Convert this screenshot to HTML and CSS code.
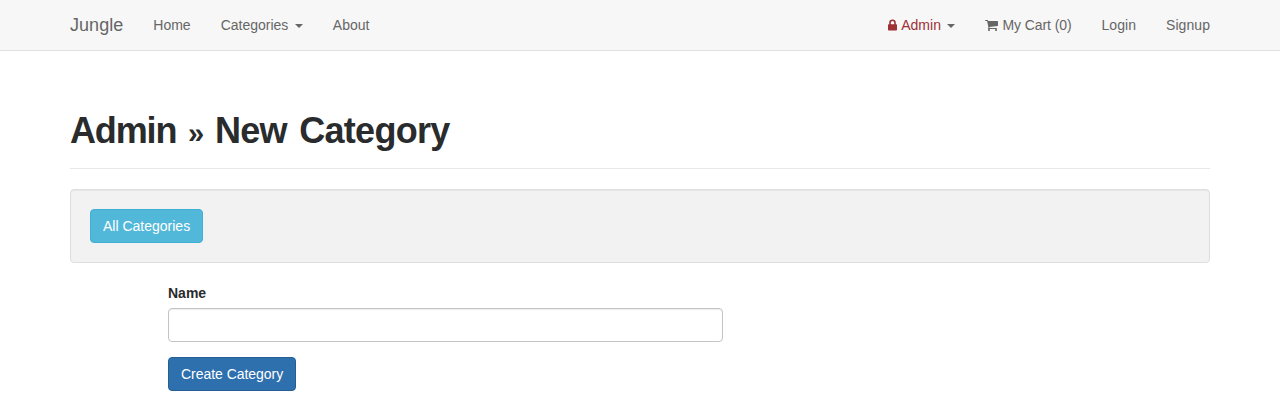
FILE: index.html
```html
<!DOCTYPE html>
<html lang="en">
<head>
<meta charset="utf-8">
<title>Jungle</title>
<link rel="stylesheet" href="styles.css">
</head>
<body>
<nav class="navbar">
  <div class="container navbar-inner">
    <a class="brand" href="#">Jungle</a>
    <ul class="nav">
      <li><a href="#">Home</a></li>
      <li><a href="#">Categories<span class="caret"></span></a></li>
      <li><a href="#">About</a></li>
    </ul>
    <ul class="nav nav-right">
      <li><a class="admin" href="#"><svg class="icon-lock" viewBox="0 0 9 12" width="9" height="12"><path fill="currentColor" d="M.8 5.2H1.2V3.8a3.3 3.3 0 0 1 6.600 0V5.200h.4a.8.8 0 0 1 .8.8v4.700a.8.800 0 0 1-.8.8H.8a.8.8 0 0 1-.8-.8V6a.8.8 0 0 1 .8-.8zM2.800 5.200h3.400V3.800a1.700 1.700 0 0 0-3.400 0z"/></svg>Admin<span class="caret"></span></a></li>
      <li><a class="cart" href="#"><svg class="icon-cart" viewBox="0 0 1664 1792" width="13" height="14"><path transform="translate(0,1536) scale(1,-1)" fill="currentColor" d="M640 0q0 -52 -38 -90t-90 -38t-90 38t-38 90t38 90t90 38t90 -38t38 -90zM1536 0q0 -52 -38 -90t-90 -38t-90 38t-38 90t38 90t90 38t90 -38t38 -90zM1664 1088v-512q0 -24 -16.500 -42.500t-40.500 -21.500l-1044 -122q13 -60 13 -70q0 -16 -24 -64h920q26 0 45 -19t19 -45t-19 -45t-45 -19h-1024q-26 0 -45 19t-19 45q0 11 8 31.500t16 36t21.500 40t15.500 29.500l-177 823h-204q-26 0 -45 19t-19 45t19 45t45 19h256q16 0 28.500 -6.500t19.500 -15.500t13 -24.500t8 -26t5.500 -29.500t4.500 -26h1201q26 0 45 -19t19 -45z"/></svg>My Cart (0)</a></li>
      <li><a href="#">Login</a></li>
      <li><a href="#">Signup</a></li>
    </ul>
  </div>
</nav>
<main class="container">
  <header class="page-header"><h1>Admin <span class="separator">»</span> <span class="page-name">New Category</span></h1></header>
  <div class="well"><a class="btn btn-info" href="#">All Categories</a></div>
  <form class="form">
    <label for="name">Name</label>
    <input id="name" class="form-control" type="text">
    <button class="btn btn-primary" type="button">Create Category</button>
  </form>
</main>
</body>
</html>
```
FILE: styles.css
```css
* { box-sizing: border-box; }
body {
  margin: 0;
  font: 14px/20px "Liberation Sans", Arial, sans-serif;
  color: #292b2c;
  background: #fff;
}
a { text-decoration: none; color: inherit; }
.container { width: 1140px; margin: 0 auto; }
.navbar { height: 51px; background: #f7f7f7; border-bottom: 1px solid #e0e0e0; color: #666; }
.navbar-inner { display: flex; }
.brand { font-size: 18px; padding: 15px 15px 15px 0; letter-spacing: .04px; }
.nav { display: flex; list-style: none; margin: 0; padding: 0; }
.nav a { display: flex; align-items: center; padding: 15px; white-space: nowrap; }
.nav-right { margin-left: auto; }
.nav-right li:last-child a { padding-right: 0; }
.nav-right li:nth-last-child(-n+2) { letter-spacing: .06px; }
.caret { border: 4px solid transparent; border-top-color: #666; border-bottom: 0; margin-left: 6.5px; margin-top: 1px; }
.nav .admin { color: #9d3136; letter-spacing: .02px; }
.nav .cart { letter-spacing: -.09px; }
.nav svg { margin-right: 4px; }
.page-header { margin: 57px 0 20px; height: 61px; border-bottom: 1px solid #e8e8e8; }
h1 { margin: 0; padding-top: 1px; font-size: 36px; line-height: 44px; letter-spacing: -1.15px; word-spacing: 3px; font-weight: 700; }
.separator { font-size: 29px; line-height: 1; }
.page-name { letter-spacing: -.7px; }
.well { height: 74px; padding: 19px; border: 1px solid #dedede; border-radius: 4px; background: #f2f2f2; box-shadow: inset 0 1px 1px rgba(0,0,0,.05); }
.btn { display: inline-block; height: 34px; padding: 6px 12px; border: 1px solid; border-radius: 4px; font: inherit; color: #fff; white-space: nowrap; }
.btn-info { background: #52b8d9; border-color: #3fb0d4; }
.btn-primary { background: #2e6fae; border-color: #265f96; letter-spacing: -.04px; }
.form { width: 555px; margin: 20px 0 0 98px; }
label { display: block; font-weight: 700; margin-bottom: 5px; }
.form-control { display: block; width: 100%; height: 34px; margin-bottom: 15px; border: 1px solid #c4c4c4; border-radius: 4px; box-shadow: inset 0 1px 1px rgba(0,0,0,.075); }
```
